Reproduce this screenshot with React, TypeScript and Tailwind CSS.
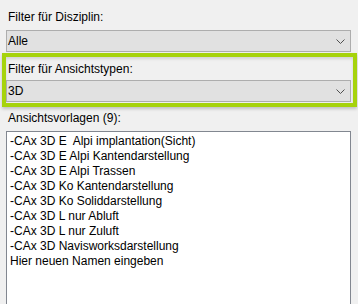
import React from 'react';

const views = [
  '-CAx 3D E  Alpi implantation(Sicht)',
  '-CAx 3D E Alpi Kantendarstellung',
  '-CAx 3D E Alpi Trassen',
  '-CAx 3D Ko Kantendarstellung',
  '-CAx 3D Ko Soliddarstellung',
  '-CAx 3D L nur Abluft',
  '-CAx 3D L nur Zuluft',
  '-CAx 3D Navisworksdarstellung',
  'Hier neuen Namen eingeben',
];

function Chevron() {
  return (
    <svg width="9" height="5" viewBox="0 0 9 5" fill="none" className="shrink-0">
      <path d="M0.5 0.5 L4.5 4.5 L8.5 0.5" stroke="#505050" strokeWidth="1" />
    </svg>
  );
}

function Combo({ value }: { value: string }) {
  return (
    <div className="flex h-[22px] w-[345px] items-center justify-between border border-[#adadad] bg-[#e1e1e1] pl-[1px] pr-[5px]">
      <span className="leading-[15px]">{value}</span>
      <Chevron />
    </div>
  );
}

export default function App() {
  return (
    <div
      className="h-[304px] w-[358px] overflow-hidden bg-[#f0f0f0] text-[12px] text-black"
      style={{ fontFamily: '"Liberation Sans", Arial, sans-serif' }}
    >
      <div className="pl-[8px] pt-[10px] leading-[15px]">Filter für Disziplin:</div>
      <div className="ml-[6px] mt-[5px]">
        <Combo value="Alle" />
      </div>

      {/* Highlighted filter */}
      <div className="ml-[2px] mt-[1px] w-[355px] border-[4px] border-[#a6d30c] pb-[1px] shadow-[0_2px_3px_rgba(0,0,0,0.2),inset_0_2px_3px_rgba(0,0,0,0.12)]">
        <div className="pl-[2px] pt-[4px] leading-[16px]">Filter für Ansichtstypen:</div>
        <div className="mt-[3px]">
          <Combo value="3D" />
        </div>
      </div>

      <div className="pl-[8px] pt-[3px] leading-[16px]">Ansichtsvorlagen (9):</div>
      <div className="ml-[6px] mt-[5px] h-[190px] w-[345px] border border-[#828790] bg-white pl-[3px] pt-[2px]">
        {views.map(v => (
          <div key={v} className="whitespace-pre leading-[15px]">
            {v}
          </div>
        ))}
      </div>
    </div>
  );
}
